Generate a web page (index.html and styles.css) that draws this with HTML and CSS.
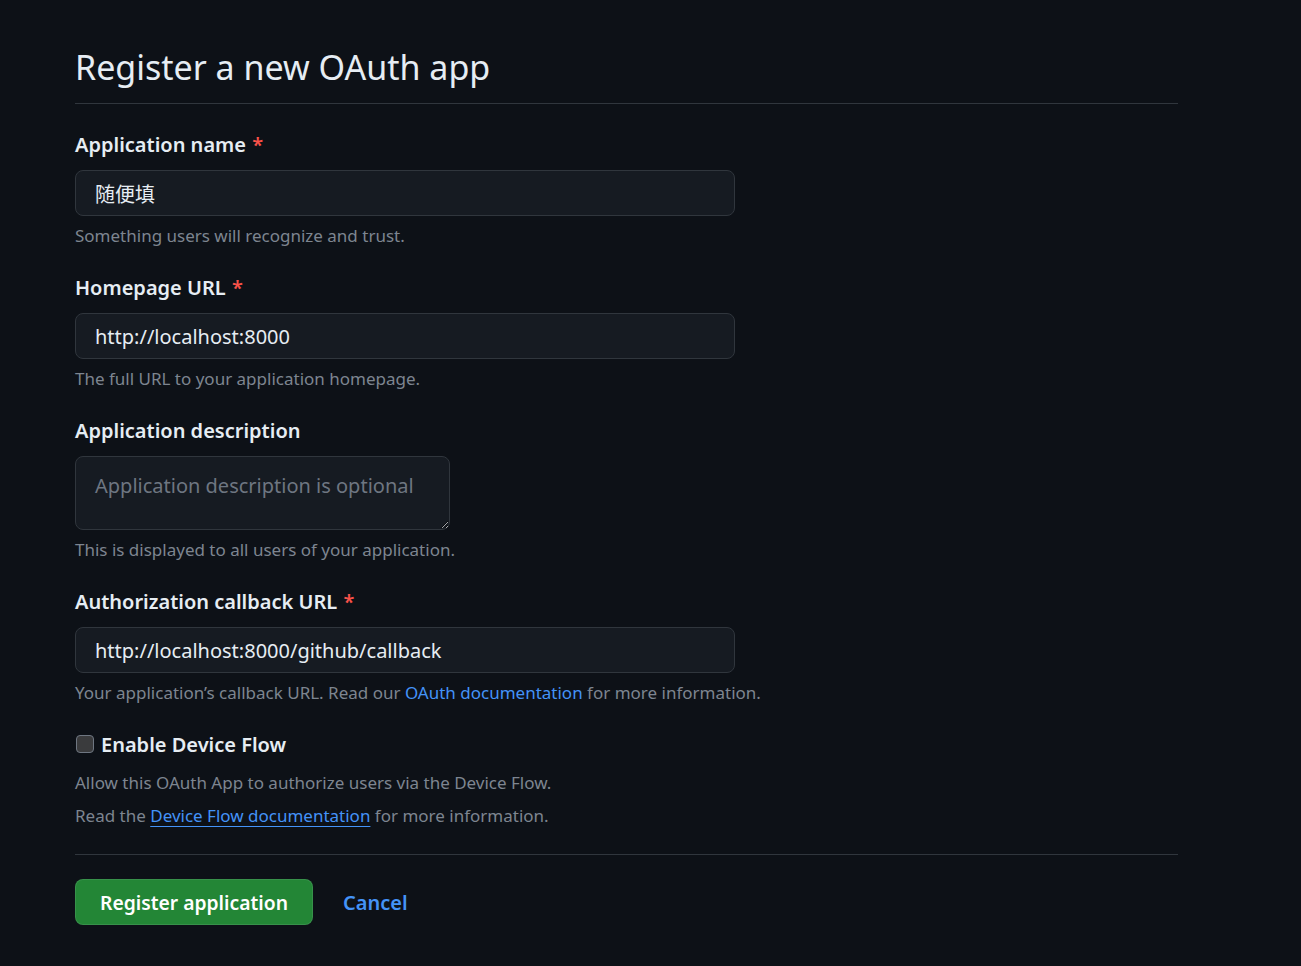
FILE: index.html
```html
<!DOCTYPE html>
<html lang="en">
<head>
<meta charset="utf-8">
<title>Register a new OAuth app</title>
<link rel="stylesheet" href="styles.css">
</head>
<body>
<main class="page">
  <h2 class="title">Register a new OAuth app</h2>
  <form class="form">
    <div class="group">
      <label class="label">Application name <span class="req">*</span></label>
      <input class="control wide" type="text" value="随便填">
      <p class="note">Something users will recognize and trust.</p>
    </div>
    <div class="group">
      <label class="label">Homepage URL <span class="req">*</span></label>
      <input class="control wide" type="text" value="http://localhost:8000">
      <p class="note">The full URL to your application homepage.</p>
    </div>
    <div class="group">
      <label class="label">Application description</label>
      <textarea class="control area" placeholder="Application description is optional"></textarea>
      <p class="note">This is displayed to all users of your application.</p>
    </div>
    <div class="group">
      <label class="label">Authorization callback URL <span class="req">*</span></label>
      <input class="control wide" type="text" value="http://localhost:8000/github/callback">
      <p class="note">Your application’s callback URL. Read our <a class="link" href="#">OAuth documentation</a> for more information.</p>
    </div>
    <div class="group check-group">
      <label class="check-label"><span class="box"></span>Enable Device Flow</label>
      <p class="note">Allow this OAuth App to authorize users via the Device Flow.</p>
      <p class="note second">Read the <a class="link under" href="#">Device Flow documentation</a> for more information.</p>
    </div>
    <div class="actions">
      <button class="btn" type="button">Register application</button>
      <a class="cancel" href="#">Cancel</a>
    </div>
  </form>
</main>
</body>
</html>
```
FILE: styles.css
```css
* { box-sizing: border-box; }
html, body {
  margin: 0;
  background: #0d1117;
}
body {
  font-family: "Noto Sans", "Noto Sans CJK SC", sans-serif;
  color: #e6edf3;
}
.page {
  width: 1103px;
  margin-left: 75px;
  padding-top: 42px;
}
.title {
  margin: 0;
  font-size: 34px;
  font-weight: 400;
  line-height: 51px;
  padding-bottom: 10px;
  border-bottom: 1px solid #30363d;
}
.form {
  padding-top: 26px;
}
.group {
  display: flex;
  flex-direction: column;
  align-items: flex-start;
  margin-bottom: 25px;
}
.label {
  font-size: 20px;
  font-weight: 600;
  line-height: 30px;
  margin-bottom: 10px;
}
.req { color: #f85149; margin-left: 1px; }
.control {
  font-family: "Noto Sans", "Noto Sans CJK SC", sans-serif;
  font-size: 20px;
  color: #e6edf3;
  background: #161b22;
  border: 1px solid #30363d;
  border-radius: 8px;
  outline: none;
}
.wide {
  width: 660px;
  height: 46px;
  padding: 0 19px;
  line-height: 44px;
}
.area {
  width: 375px;
  height: 74px;
  padding: 14px 19px;
  line-height: 30px;
  resize: vertical;
}
.area::placeholder { color: #6e7681; }
.note {
  margin: 7px 0 0;
  font-size: 17px;
  line-height: 25px;
  color: #7d8590;
}
.link { color: #4493f8; text-decoration: none; }
.link.under { text-decoration: underline; text-underline-offset: 4px; }
.check-group {
  margin-top: 1px;
  margin-bottom: 26px;
}
.check-label {
  display: flex;
  align-items: center;
  font-size: 20px;
  font-weight: 600;
  line-height: 30px;
  margin-bottom: 3px;
}
.box {
  width: 18px;
  height: 18px;
  margin: -2px 7px 0 1px;
  border: 1.5px solid #6e7681;
  border-radius: 4px;
  background: #3a3b3d;
}
.note.second { margin-top: 8px; }
.actions {
  border-top: 1px solid #30363d;
  padding-top: 24px;
  display: flex;
  align-items: center;
}
.btn {
  font-family: "Noto Sans", sans-serif;
  height: 46px;
  padding: 0 24px;
  font-size: 19.3px;
  font-weight: 600;
  color: #ffffff;
  background: #238636;
  border: 1px solid rgba(240,246,252,0.1);
  border-radius: 8px;
}
.cancel {
  margin-left: 30px;
  font-size: 20px;
  font-weight: 600;
  color: #4493f8;
  text-decoration: none;
}
```
